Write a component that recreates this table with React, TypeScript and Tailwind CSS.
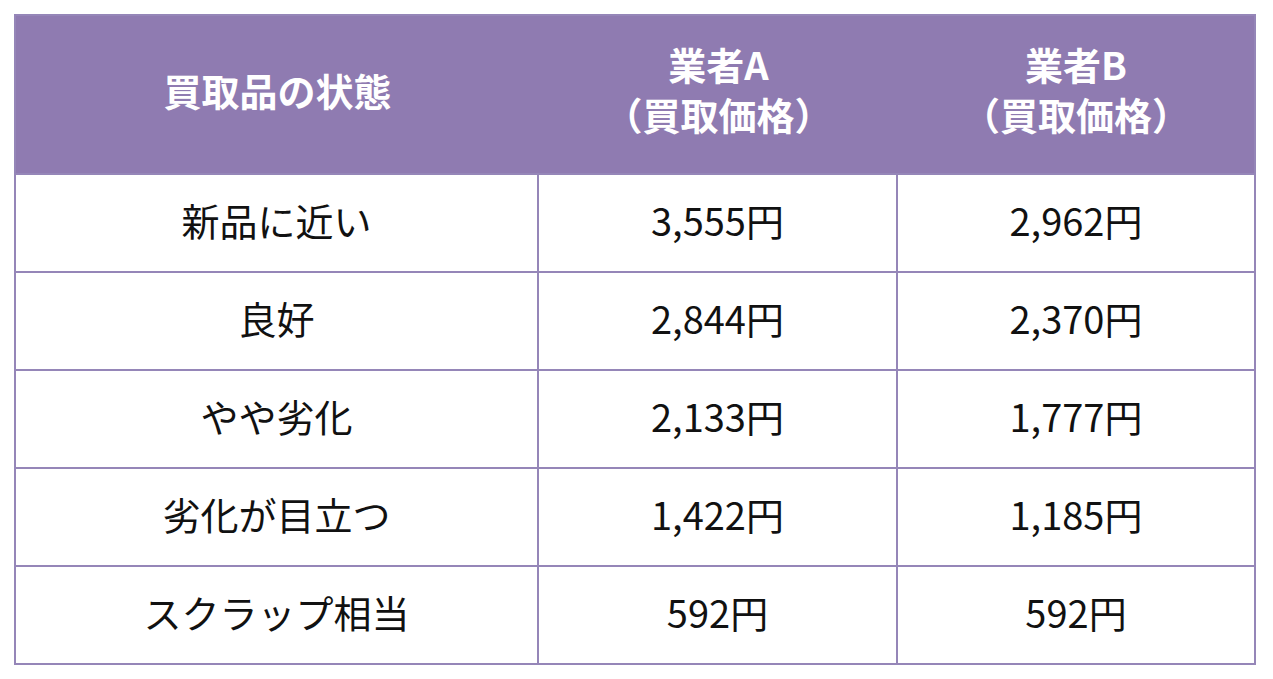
import React from "react";

const rows: [string, string, string][] = [
  ["新品に近い", "3,555円", "2,962円"],
  ["良好", "2,844円", "2,370円"],
  ["やや劣化", "2,133円", "1,777円"],
  ["劣化が目立つ", "1,422円", "1,185円"],
  ["スクラップ相当", "592円", "592円"],
];

export default function App() {
  return (
    <div
      className="w-[1273px] h-[679px] bg-white pt-[14px] pl-[14px]"
      style={{ fontFamily: '"Noto Sans CJK JP", "Noto Sans", sans-serif' }}
    >
      <div className="w-[1242px] border-2 border-[#9586b8]">
        <div className="grid grid-cols-[523px_359px_356px] h-[157px] bg-[#8f7bb1] text-white font-bold text-[38px] leading-[50px]">
          <div className="flex items-center justify-center pb-[10px]">買取品の状態</div>
          <div className="flex flex-col items-center justify-center pb-[12px]">
            <span>業者A</span>
            <span>（買取価格）</span>
          </div>
          <div className="flex flex-col items-center justify-center pb-[12px]">
            <span>業者B</span>
            <span>（買取価格）</span>
          </div>
        </div>
        {rows.map((r, i) => (
          <div
            key={i}
            className="grid grid-cols-[523px_359px_356px] h-[98px] border-t-2 border-[#9586b8] text-[38px] text-[#111111]"
          >
            <div className="flex items-center justify-center pb-[8px] border-r-2 border-[#9586b8]">{r[0]}</div>
            <div className="flex items-center justify-center pb-[8px] border-r-2 border-[#9586b8]">{r[1]}</div>
            <div className="flex items-center justify-center pb-[8px]">{r[2]}</div>
          </div>
        ))}
      </div>
    </div>
  );
}
